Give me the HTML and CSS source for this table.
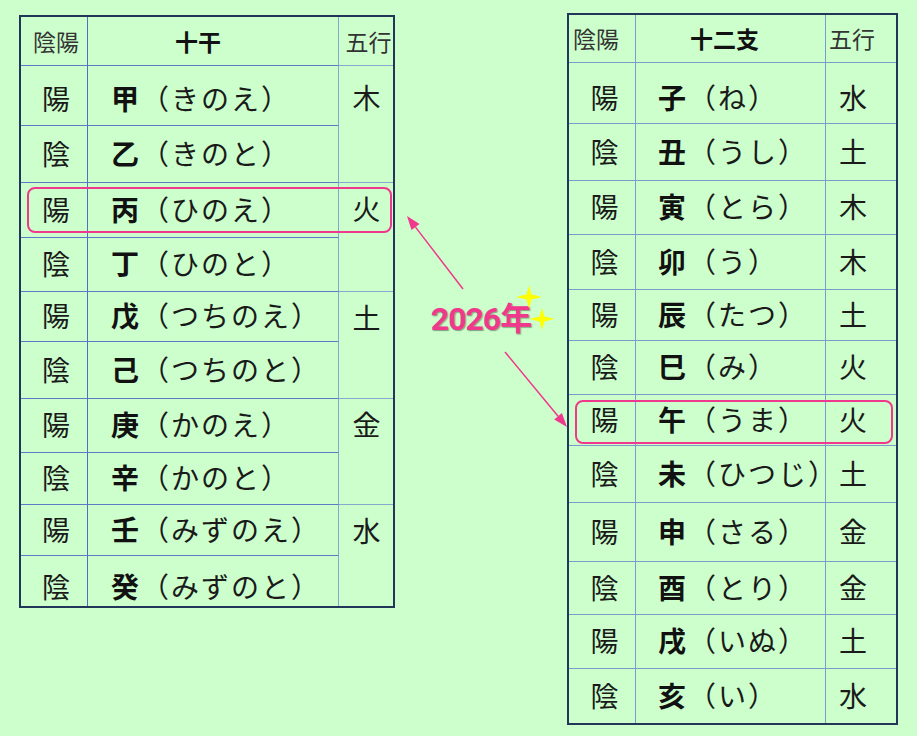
FILE: index.html
```html
<!DOCTYPE html>
<html lang="ja">
<head>
<meta charset="utf-8">
<title>十干と十二支</title>
<link rel="stylesheet" href="styles.css">
</head>
<body>
<div class="page">
  <div class="board">
    <div class="tbl-wrap tbl-left">
      <div class="grid kan">
        <div class="cell c1 hd">陰陽</div>
        <div class="cell c2 hd hd-name">十干</div>
        <div class="cell c3 hd">五行</div>

        <div class="cell c1 first">陽</div>
        <div class="cell c2 first"><b>甲</b>（きのえ）</div>
        <div class="cell c3 wx wx-first">木</div>
        <div class="cell c1">陰</div>
        <div class="cell c2"><b>乙</b>（きのと）</div>

        <div class="cell c1">陽</div>
        <div class="cell c2"><b>丙</b>（ひのえ）</div>
        <div class="cell c3 wx">火</div>
        <div class="cell c1">陰</div>
        <div class="cell c2"><b>丁</b>（ひのと）</div>

        <div class="cell c1">陽</div>
        <div class="cell c2"><b>戊</b>（つちのえ）</div>
        <div class="cell c3 wx">土</div>
        <div class="cell c1">陰</div>
        <div class="cell c2"><b>己</b>（つちのと）</div>

        <div class="cell c1">陽</div>
        <div class="cell c2"><b>庚</b>（かのえ）</div>
        <div class="cell c3 wx">金</div>
        <div class="cell c1">陰</div>
        <div class="cell c2"><b>辛</b>（かのと）</div>

        <div class="cell c1">陽</div>
        <div class="cell c2"><b>壬</b>（みずのえ）</div>
        <div class="cell c3 wx last">水</div>
        <div class="cell c1 last lastrow">陰</div>
        <div class="cell c2 last lastrow"><b>癸</b>（みずのと）</div>
      </div>
      <div class="hl hl-left"></div>
    </div>

    <div class="mid">
      <span class="year">2026年</span>
    </div>

    <div class="tbl-wrap tbl-right">
      <div class="grid shi">
        <div class="cell c1 hd">陰陽</div>
        <div class="cell c2 hd hd-name">十二支</div>
        <div class="cell c3 hd">五行</div>

        <div class="cell c1 first">陽</div><div class="cell c2 first"><b>子</b>（ね）</div><div class="cell c3 first">水</div>
        <div class="cell c1">陰</div><div class="cell c2"><b>丑</b>（うし）</div><div class="cell c3">土</div>
        <div class="cell c1">陽</div><div class="cell c2"><b>寅</b>（とら）</div><div class="cell c3">木</div>
        <div class="cell c1">陰</div><div class="cell c2"><b>卯</b>（う）</div><div class="cell c3">木</div>
        <div class="cell c1">陽</div><div class="cell c2"><b>辰</b>（たつ）</div><div class="cell c3">土</div>
        <div class="cell c1">陰</div><div class="cell c2"><b>巳</b>（み）</div><div class="cell c3">火</div>
        <div class="cell c1">陽</div><div class="cell c2"><b>午</b>（うま）</div><div class="cell c3">火</div>
        <div class="cell c1">陰</div><div class="cell c2"><b>未</b>（ひつじ）</div><div class="cell c3">土</div>
        <div class="cell c1">陽</div><div class="cell c2"><b>申</b>（さる）</div><div class="cell c3">金</div>
        <div class="cell c1">陰</div><div class="cell c2"><b>酉</b>（とり）</div><div class="cell c3">金</div>
        <div class="cell c1">陽</div><div class="cell c2"><b>戌</b>（いぬ）</div><div class="cell c3">土</div>
        <div class="cell c1 last">陰</div><div class="cell c2 last"><b>亥</b>（い）</div><div class="cell c3 last">水</div>
      </div>
      <div class="hl hl-right"></div>
    </div>
  </div>

  <svg class="overlay" width="917" height="736" viewBox="0 0 917 736" aria-hidden="true">
    <g class="arrow">
      <line x1="463" y1="289" x2="415.5" y2="227.1"/>
      <polygon points="407,216 419.5,224.1 411.5,230.1"/>
      <line x1="505" y1="352" x2="558.1" y2="416.2"/>
      <polygon points="567,427 561.9,413 554.2,419.4"/>
    </g>
    <g class="spark">
      <polygon points="529,285.5 531.5,294.5 542,297 531.5,299.5 529,308.5 526.5,299.5 516,297 526.5,294.5"/>
      <polygon points="542,308 544.5,316.5 554.5,319 544.5,321.5 542,330 539.5,321.5 529.5,319 539.5,316.5"/>
    </g>
  </svg>
</div>
</body>
</html>
```

FILE: styles.css
```css
html, body {
  margin: 0;
  padding: 0;
}

body {
  background: #ccffcc;
  font-family: "Noto Sans CJK JP", "Noto Sans", sans-serif;
  color: #1a1a1a;
}

.page {
  position: relative;
  width: 917px;
  height: 736px;
  overflow: hidden;
}

.board {
  display: flex;
  align-items: flex-start;
  padding-left: 19px;
}

.tbl-wrap {
  position: relative;
}

.tbl-left {
  margin-top: 15px;
}

.tbl-right {
  margin-top: 13px;
}

.grid {
  display: grid;
  border: 2px solid #22365a;
}

.kan {
  grid-template-columns: 67px 251px 54px;
  grid-template-rows: 49px 60px 57px 55px 54px 50px 57px 54px 52px 51px 50px;
}

.shi {
  grid-template-columns: 67px 190px 70px;
  grid-template-rows: 48px 61px 57px 54px 55px 51px 54px 51px 57px 59px 53px 54px 54px;
}

.cell {
  box-sizing: border-box;
  display: flex;
  align-items: center;
  font-size: 28px;
  line-height: 1;
  white-space: nowrap;
  padding-bottom: 3px;
  border-bottom: 1px solid #5a7cc8;
}

.cell b {
  font-weight: 700;
  color: #111;
}

.c1 {
  justify-content: center;
  padding-left: 4px;
  border-right: 1px solid #4d6fc6;
}

.c2 {
  padding-left: 23px;
  letter-spacing: 2px;
  border-right: 1px solid #86a6cc;
}

.c3 {
  justify-content: center;
  padding-left: 1px;
}

.kan .c3 {
  border-bottom-color: #88a8cc;
}

.hd {
  font-size: 23px;
  color: #333;
  letter-spacing: 0;
  padding-bottom: 0;
}

.hd-name {
  font-weight: 700;
  color: #111;
  padding-left: 87px;
}

.kan .hd.c3 {
  padding-left: 5px;
}

.first {
  padding-top: 8px;
}

.lastrow {
  padding-top: 12px;
}

.last {
  border-bottom: none;
}

.wx {
  grid-row: span 2;
  align-items: flex-start;
  padding-top: 11px;
}

.wx-first {
  padding-top: 17px;
}

/* right table */
.shi .cell {
  border-bottom-color: #7b9bcb;
}

.shi .c1 {
  border-right-color: #7b9bcb;
  padding-left: 5px;
}

.shi .c2 {
  border-right-color: #7b9bcb;
  padding-left: 22px;
}

.shi .c3 {
  justify-content: flex-start;
  padding-left: 13px;
}

.shi .hd.c1 {
  justify-content: flex-start;
  padding-left: 4px;
}

.shi .hd-name {
  padding-left: 54px;
}

.shi .hd.c3 {
  padding-left: 3px;
}

.shi .first {
  padding-top: 10px;
}

.shi .last {
  border-bottom: none;
}

/* highlight frames */
.hl {
  position: absolute;
  box-sizing: border-box;
  border: 2px solid #f0388c;
  border-radius: 8px;
}

.hl-left {
  left: 8px;
  top: 172px;
  width: 365px;
  height: 46px;
}

.hl-right {
  left: 8px;
  top: 387px;
  width: 318px;
  height: 44px;
}

/* middle label */
.mid {
  width: 172px;
  padding-top: 303px;
  display: flex;
  justify-content: center;
}

.year {
  font-family: Roboto, "Noto Sans CJK JP", sans-serif;
  font-weight: 700;
  font-size: 32px;
  line-height: 1;
  letter-spacing: -1px;
  color: #f0388c;
  text-shadow: 1px 1px 1px rgba(60, 90, 60, 0.55);
}

/* overlay */
.overlay {
  position: absolute;
  left: 0;
  top: 0;
  pointer-events: none;
}

.arrow line {
  stroke: #f0388c;
  stroke-width: 1.5;
}

.arrow polygon {
  fill: #f0388c;
}

.spark polygon {
  fill: #ffff00;
}
```
